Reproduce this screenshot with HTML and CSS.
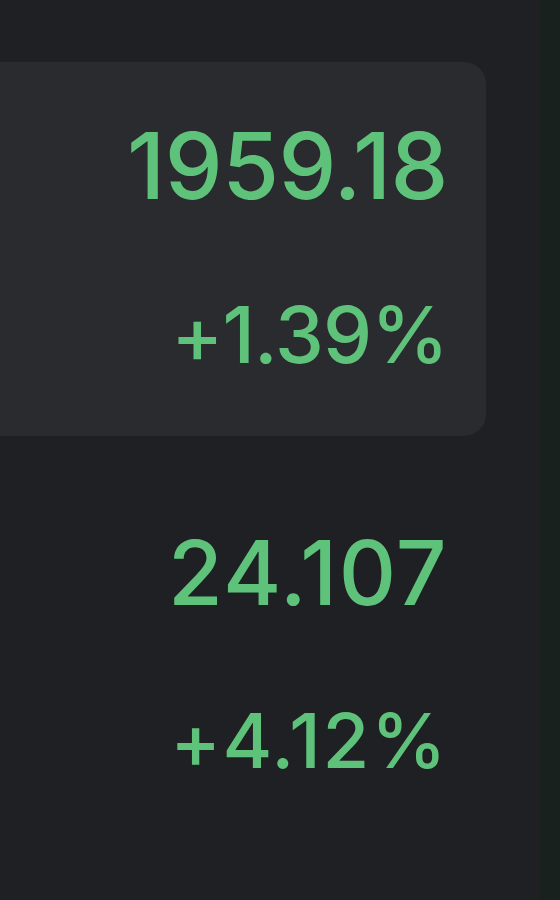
FILE: index.html
```html
<!DOCTYPE html>
<html>
<head>
<meta charset="utf-8">
<link rel="stylesheet" href="styles.css">
</head>
<body>
<div class="page">
  <main class="list">
    <section class="quote quote-active">
      <div class="price price-a">1959.18</div>
      <div class="change change-a">+1.39%</div>
    </section>
    <section class="quote">
      <div class="price price-b">24.107</div>
      <div class="change change-b">+4.12%</div>
    </section>
  </main>
  <aside class="edge"></aside>
</div>
</body>
</html>
```
FILE: styles.css
```css
html, body {
  margin: 0;
  padding: 0;
  background: #1f2024;
}
body {
  font-family: Inter, "Liberation Sans", Arial, sans-serif;
  font-weight: 500;
}
.page {
  display: flex;
  width: 560px;
  height: 900px;
  overflow: hidden;
}
.list {
  flex: 0 0 540px;
  display: flex;
  flex-direction: column;
  padding-top: 62px;
}
.edge {
  flex: 0 0 20px;
  background: #19211f;
}
.quote {
  width: 486px;
  box-sizing: border-box;
  padding-right: 38px;
  display: flex;
  flex-direction: column;
  align-items: flex-end;
  color: #5ec27a;
}
.quote-active {
  background: #2a2b2f;
  border-radius: 0 22px 22px 0;
  padding-top: 58px;
  padding-bottom: 62px;
}
.quote + .quote {
  padding-top: 92px;
}
.price, .change {
  white-space: nowrap;
}
.price-a {
  font-size: 92px;
  line-height: 92px;
  letter-spacing: -0.5px;
}
.change-a {
  font-size: 78px;
  line-height: 78px;
  letter-spacing: -0.8px;
  margin-top: 84px;
}
.price-b {
  font-size: 89px;
  line-height: 89px;
  letter-spacing: 1.4px;
}
.change-b {
  font-size: 76px;
  line-height: 76px;
  letter-spacing: 1.6px;
  margin-top: 85px;
}
```
